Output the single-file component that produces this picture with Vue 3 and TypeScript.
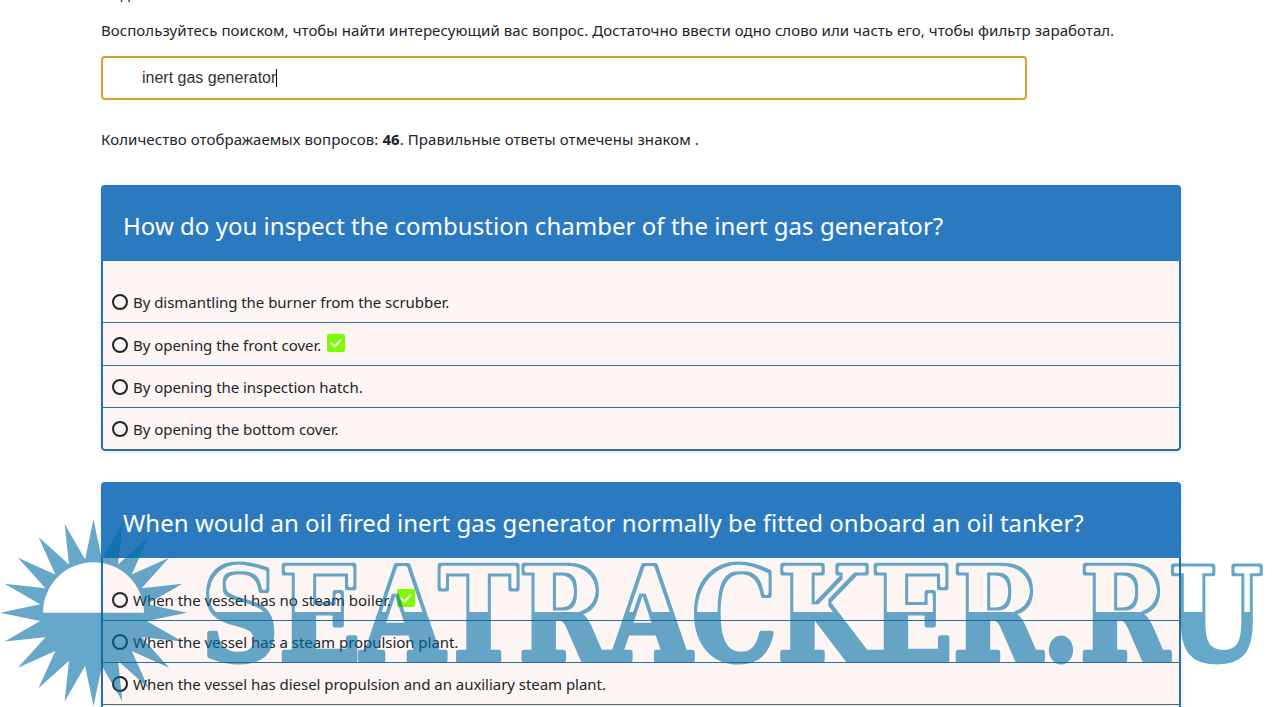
<script setup lang="ts">
interface Answer { text: string; correct?: boolean }
interface Question { title: string; answers: Answer[] }

const questions: Question[] = [
  {
    title: 'How do you inspect the combustion chamber of the inert gas generator?',
    answers: [
      { text: 'By dismantling the burner from the scrubber.' },
      { text: 'By opening the front cover.', correct: true },
      { text: 'By opening the inspection hatch.' },
      { text: 'By opening the bottom cover.' },
    ],
  },
  {
    title: 'When would an oil fired inert gas generator normally be fitted onboard an oil tanker?',
    answers: [
      { text: 'When the vessel has no steam boiler.', correct: true },
      { text: 'When the vessel has a steam propulsion plant.' },
      { text: 'When the vessel has diesel propulsion and an auxiliary steam plant.' },
      { text: 'When the vessel has a waste heat boiler.' },
    ],
  },
]

const cx = 93.5
const cy = 612.7
const rays = 20
const tips: string[] = []
for (let i = 0; i < rays; i++) {
  const a = (Math.PI * 2 * i) / rays - Math.PI / 2
  tips.push(`${(cx + Math.cos(a) * 93.5).toFixed(1)} ${(cy + Math.sin(a) * 93.5).toFixed(1)}`)
  const b = a + Math.PI / rays
  tips.push(`${(cx + Math.cos(b) * 54).toFixed(1)} ${(cy + Math.sin(b) * 54).toFixed(1)}`)
}
const sunPath = `M${tips.join(' L')} Z M${cx - 50.5} ${cy} A50.5 50.5 0 0 1 ${cx + 50.5} ${cy} Z`
</script>

<template>
  <div class="page">
    <main class="content">
      <p class="clipped">Подсказка</p>
      <p class="intro">Воспользуйтесь поиском, чтобы найти интересующий вас вопрос. Достаточно ввести одно слово или часть его, чтобы фильтр заработал.</p>
      <div class="search"><span class="search-text">inert gas generator</span><span class="caret"></span></div>
      <p class="count">Количество отображаемых вопросов: <b>46</b>. Правильные ответы отмечены знаком .</p>

      <section v-for="q in questions" :key="q.title" class="card">
        <h2 class="card-title">{{ q.title }}</h2>
        <ul class="answers">
          <li v-for="a in q.answers" :key="a.text" class="answer" :class="{ 'answer-correct': a.correct }">
            <span class="radio"></span>
            <span>{{ a.text }}</span>
            <svg v-if="a.correct" class="check" viewBox="0 0 18 18" aria-hidden="true">
              <rect width="18" height="18" rx="2" fill="#7cfc00" />
              <path d="M4.5 9.5 L7.8 12.6 L13.6 6" fill="none" stroke="#e8fbd6" stroke-width="2.4" stroke-linecap="round" stroke-linejoin="round" />
            </svg>
          </li>
        </ul>
      </section>
    </main>

    <svg class="watermark" width="1282" height="707" viewBox="0 0 1282 707">
      <defs>
        <clipPath id="wm-top"><rect x="0" y="0" width="1282" height="612" /></clipPath>
        <clipPath id="wm-bottom"><rect x="0" y="612" width="1282" height="95" /></clipPath>
        <filter id="wm-outline" filterUnits="userSpaceOnUse" x="150" y="520" width="1132" height="187">
          <feMorphology in="SourceGraphic" operator="erode" radius="3" result="inner" />
          <feComposite in="SourceGraphic" in2="inner" operator="out" />
        </filter>
        <text id="wm-word" class="wm-text" x="201" y="660" textLength="1062" lengthAdjust="spacingAndGlyphs" fill="#006ea5" stroke="#006ea5" stroke-width="5" stroke-linejoin="round">SEATRACKER.RU</text>
      </defs>
      <g class="wm-group">
        <path :d="sunPath" fill="#006ea5" fill-rule="evenodd" />
        <g clip-path="url(#wm-top)"><use href="#wm-word" filter="url(#wm-outline)" /></g>
        <g clip-path="url(#wm-bottom)"><use href="#wm-word" /></g>
      </g>
    </svg>
  </div>
</template>

<style>
html, body { margin: 0; background: #fff; overflow: hidden; }
</style>

<style scoped>
.page {
  position: relative;
  height: 707px;
  overflow: hidden;
  font-family: "Noto Sans", "Open Sans", sans-serif;
  font-size: 15px;
  color: #212529;
}
.content {
  width: 1080px;
  margin: -18px auto 0;
}
.clipped { margin: 0; height: 24px; line-height: 24px; }
.intro { margin: 12px 0 0; line-height: 24px; letter-spacing: 0.05px; }
.search {
  box-sizing: border-box;
  display: flex;
  align-items: center;
  width: 926px;
  height: 44px;
  margin-top: 14px;
  padding-left: 39px;
  border: 2px solid #d4a22a;
  border-radius: 4px;
  font-family: "Liberation Sans", Arial, sans-serif;
  font-size: 16px;
  color: #333;
}
.caret { width: 1px; height: 18px; background: #000; }
.count { margin: 27px 0 0; line-height: 24px; letter-spacing: 0.08px; }
.card {
  margin-top: 34px;
  border-radius: 4px;
  box-shadow: 0 1px 5px rgba(43, 122, 191, 0.2);
  overflow: hidden;
}
.card + .card { margin-top: 31px; }
.card-title {
  box-sizing: border-box;
  margin: 0;
  height: 76px;
  padding: 4px 0 0 22px;
  display: flex;
  align-items: center;
  background: #2b7abf;
  color: #fff;
  font-size: 24px;
  font-weight: 400;
  letter-spacing: 0.03px;
}
.answers {
  list-style: none;
  margin: 0;
  padding: 20px 0 0;
  background: #fdf5f3;
  border: 2px solid #2e6e9e;
  border-top: 0;
  border-radius: 0 0 4px 4px;
}
.answer {
  box-sizing: border-box;
  display: flex;
  align-items: center;
  gap: 5px;
  height: 42px;
  padding: 1px 0 0 10px;
  letter-spacing: -0.04px;
  border-bottom: 1px solid #2e6e9e;
}
.answer-correct { height: 43px; }
.answer:last-child { border-bottom: 0; height: 41px; }
.radio {
  box-sizing: border-box;
  width: 16px;
  height: 16px;
  margin-left: -1px;
  border: 2px solid #212529;
  border-radius: 50%;
}
.check { width: 18px; height: 18px; margin-left: 1px; margin-top: -3px; }
.watermark {
  position: absolute;
  left: 0;
  top: 0;
  pointer-events: none;
}
.wm-group { opacity: 0.6; }
.wm-text {
  font-family: "DejaVu Serif", serif;
  font-weight: 700;
  font-size: 130px;
}
</style>
